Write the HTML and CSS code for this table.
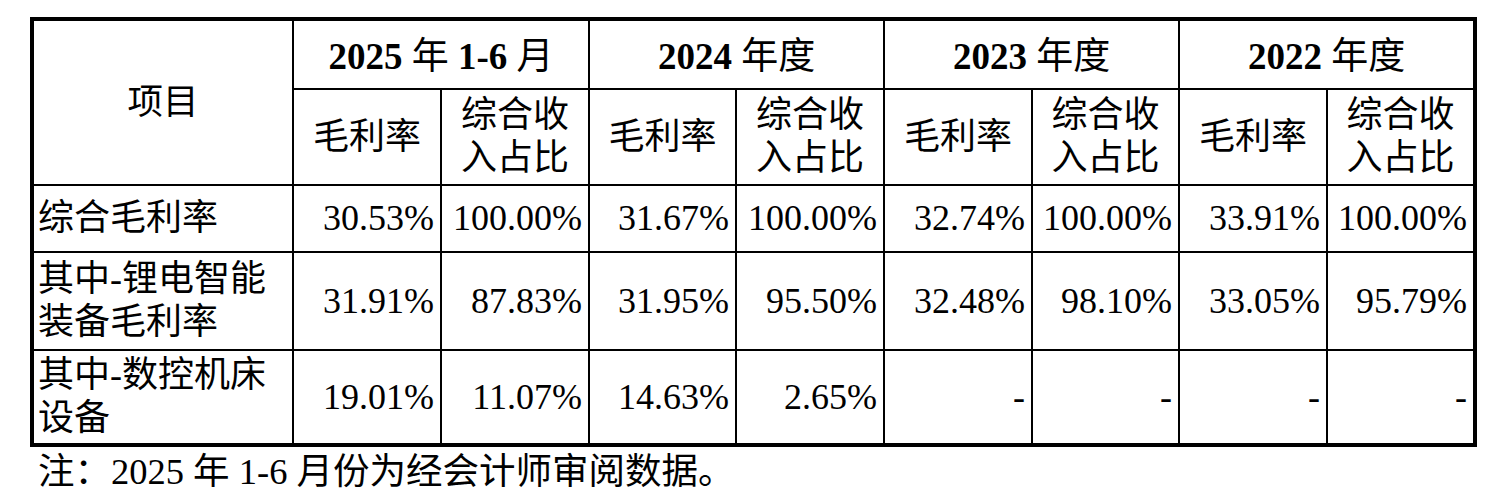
FILE: index.html
```html
<!DOCTYPE html>
<html lang="zh-CN">
<head>
<meta charset="utf-8">
<title>毛利率</title>
<link rel="stylesheet" href="styles.css">
</head>
<body>
<table class="grid">
  <colgroup>
    <col class="c-label">
    <col class="c148"><col class="c148"><col class="c147"><col class="c148">
    <col class="c148"><col class="c147"><col class="c148"><col class="c145">
  </colgroup>
  <tr class="r-h1">
    <th rowspan="2" class="head item">项目</th>
    <th colspan="2" class="head year"><b>2025</b> 年 <b>1-6</b> 月</th>
    <th colspan="2" class="head year"><b>2024</b> 年度</th>
    <th colspan="2" class="head year"><b>2023</b> 年度</th>
    <th colspan="2" class="head year last"><b>2022</b> 年度</th>
  </tr>
  <tr class="r-h2">
    <th class="head">毛利率</th>
    <th class="head">综合收<br>入占比</th>
    <th class="head">毛利率</th>
    <th class="head">综合收<br>入占比</th>
    <th class="head">毛利率</th>
    <th class="head">综合收<br>入占比</th>
    <th class="head">毛利率</th>
    <th class="head last">综合收<br>入占比</th>
  </tr>
  <tr class="r-d1">
    <td class="label">综合毛利率</td>
    <td class="num">30.53%</td>
    <td class="num">100.00%</td>
    <td class="num">31.67%</td>
    <td class="num">100.00%</td>
    <td class="num">32.74%</td>
    <td class="num">100.00%</td>
    <td class="num">33.91%</td>
    <td class="num last">100.00%</td>
  </tr>
  <tr class="r-d2">
    <td class="label">其中-锂电智能<br>装备毛利率</td>
    <td class="num">31.91%</td>
    <td class="num">87.83%</td>
    <td class="num">31.95%</td>
    <td class="num">95.50%</td>
    <td class="num">32.48%</td>
    <td class="num">98.10%</td>
    <td class="num">33.05%</td>
    <td class="num last">95.79%</td>
  </tr>
  <tr class="r-d3 final">
    <td class="label">其中-数控机床<br>设备</td>
    <td class="num">19.01%</td>
    <td class="num">11.07%</td>
    <td class="num">14.63%</td>
    <td class="num">2.65%</td>
    <td class="num">-</td>
    <td class="num">-</td>
    <td class="num">-</td>
    <td class="num last">-</td>
  </tr>
</table>
<p class="note">注：2025 年 1-6 月份为经会计师审阅数据。</p>
</body>
</html>
```

FILE: styles.css
```css
html, body {
  margin: 0;
  padding: 0;
  background: #ffffff;
}

body {
  font-family: "Liberation Serif", "Noto Sans CJK SC", serif;
  font-size: 36px;
  color: #000000;
}

.grid {
  margin: 17px 0 0 30px;
  width: 1447px;
  table-layout: fixed;
  border-collapse: separate;
  border-spacing: 0;
  border: 4px solid #000;
}

.c-label { width: 260px; }
.c148 { width: 148px; }
.c147 { width: 147px; }
.c145 { width: 145px; }

.grid th,
.grid td {
  padding: 0;
  border-right: 2px solid #000;
  border-bottom: 2px solid #000;
  vertical-align: middle;
  line-height: 43px;
  white-space: nowrap;
  overflow: hidden;
}

.grid .last { border-right: none; }
.grid .final td { border-bottom: none; }

.r-h1 { height: 69px; }
.r-h2 { height: 96px; }
.r-d1 { height: 67px; }
.r-d2 { height: 98px; }
.r-d3 { height: 92px; }

.head {
  font-weight: normal;
  text-align: center;
}

.year {
  font-size: 37px;
  padding-top: 4px !important;
}

.year b {
  font-weight: bold;
}

.item {
  font-size: 35.5px;
}

.label {
  text-align: left;
  padding-left: 4px !important;
}

.num {
  text-align: right;
  padding-right: 6px !important;
  font-size: 36px;
}

.note {
  margin: 3px 0 0 38px;
  line-height: 43px;
  font-size: 36.5px;
}
```
